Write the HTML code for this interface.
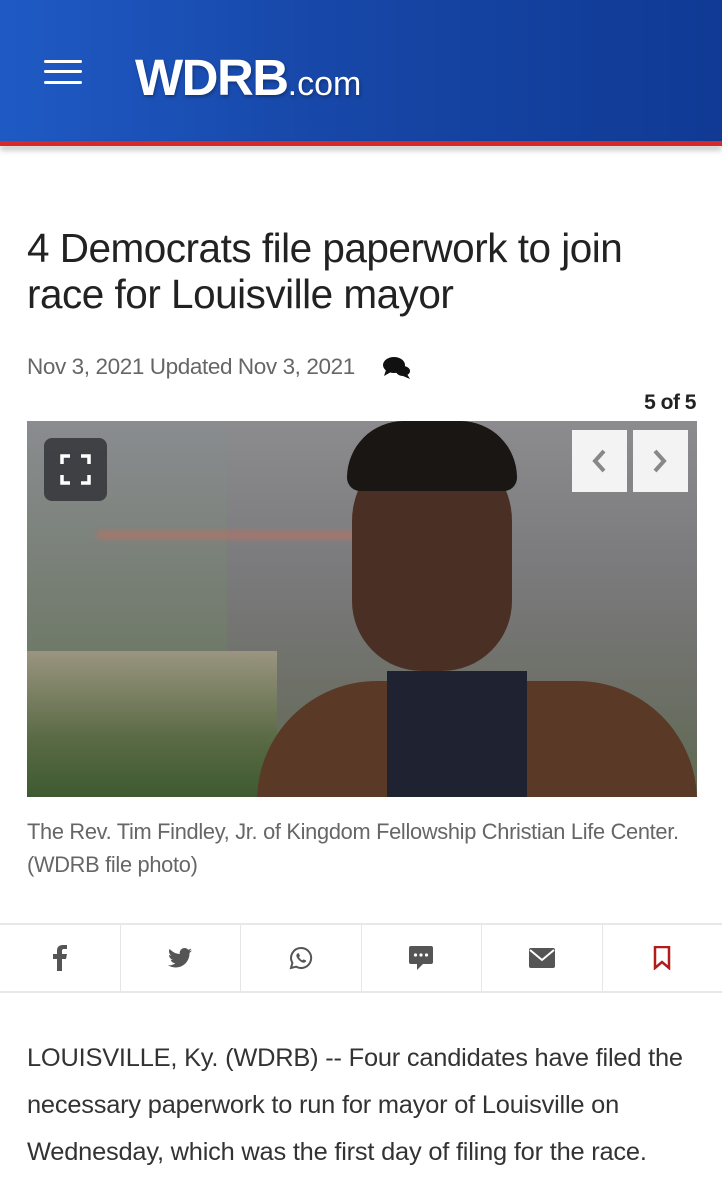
<!DOCTYPE html>
<html><head><meta charset="utf-8"><style>
*{margin:0;padding:0;box-sizing:border-box}
body{width:722px;height:1200px;overflow:hidden;background:#fff;font-family:"Liberation Sans",sans-serif;color:#333;position:relative}
.hdr{position:absolute;left:0;top:0;width:722px;height:141px;background:linear-gradient(90deg,#1f5ac4 0%,#1747a8 45%,#103a94 100%);}
.red{position:absolute;left:0;top:141px;width:722px;height:5px;background:#d42a2a;box-shadow:0 4px 6px rgba(0,0,0,.25)}
.ham{position:absolute;left:44px;width:38px;height:3px;background:#fff;border-radius:2px}
.logo{position:absolute;left:135px;top:48px;color:#fff;font-weight:bold;font-size:51px;letter-spacing:-1.5px;text-shadow:1px 2px 3px rgba(0,0,0,.3);white-space:nowrap}
.logo span{font-size:34px;font-weight:normal;letter-spacing:0}
h1{position:absolute;left:27px;top:225px;width:700px;font-weight:normal;font-size:40.5px;line-height:46px;color:#222;letter-spacing:-0.5px;white-space:nowrap}
.date{position:absolute;left:27px;top:354px;font-size:22.5px;color:#666;letter-spacing:-0.4px}
.cnt{position:absolute;right:26px;top:391px;font-weight:bold;font-size:21px;color:#222;letter-spacing:-0.5px}
.img{position:absolute;left:27px;top:421px;width:670px;height:376px;overflow:hidden;
background:linear-gradient(180deg,#8c8c8e 0%,#7a7a7c 40%,#6e7068 70%,#5d6a50 100%)}
.cap{position:absolute;left:27px;top:815px;width:700px;font-size:21.8px;line-height:33px;color:#666;letter-spacing:-0.3px;white-space:nowrap}
.share{position:absolute;left:0;top:923px;width:722px;height:70px;border-top:2px solid #e8e8e8;border-bottom:2px solid #e8e8e8;display:flex}
.share div{flex:1;border-right:1px solid #e6e6e6;display:flex;align-items:center;justify-content:center}
.share div:last-child{border-right:none}
.body{position:absolute;left:27px;top:1035px;width:700px;font-size:25.4px;line-height:47px;color:#333;letter-spacing:-0.2px;white-space:nowrap}
</style></head><body>
<div class="hdr">
<div class="ham" style="top:60px"></div><div class="ham" style="top:70px"></div><div class="ham" style="top:81px"></div>
<div class="logo">WDRB<span>.com</span></div>
</div>
<div class="red"></div>
<h1>4 Democrats file paperwork to join<br>race for Louisville mayor</h1>
<div class="date">Nov 3, 2021 Updated Nov 3, 2021</div>
<svg style="position:absolute;left:382px;top:356px" width="30" height="24" viewBox="0 0 30 24"><ellipse cx="12" cy="9" rx="11" ry="8" fill="#111"/><path d="M4 14 L2 20 L9 16Z" fill="#111"/><ellipse cx="21" cy="15" rx="7" ry="5" fill="#111"/><path d="M25 18 L28 23 L21 20Z" fill="#111"/></svg>
<div class="cnt">5 of 5</div>
<div class="img">
<div style="position:absolute;left:0;top:0;width:200px;height:376px;background:linear-gradient(180deg,#8a8c90,#707a6a 60%,#4e6040)"></div>
<div style="position:absolute;left:0;top:230px;width:250px;height:146px;background:linear-gradient(180deg,#9a9580,#5a6a45 60%,#3e5a30)"></div>
<div style="position:absolute;left:70px;top:110px;width:280px;height:8px;background:#c07060;opacity:.6;filter:blur(3px)"></div>
<div style="position:absolute;left:230px;top:260px;width:440px;height:140px;border-radius:120px 120px 0 0;background:#5a3a26"></div>
<div style="position:absolute;left:360px;top:250px;width:140px;height:130px;background:#1f2230"></div>
<div style="position:absolute;left:325px;top:20px;width:160px;height:230px;border-radius:80px 80px 70px 70px;background:#4a3024"></div>
<div style="position:absolute;left:320px;top:0;width:170px;height:70px;border-radius:85px 85px 20px 20px;background:#1a1614"></div>
<div style="position:absolute;left:17px;top:17px;width:63px;height:63px;border-radius:8px;background:rgba(50,52,56,.85)"></div>
<svg style="position:absolute;left:33px;top:33px" width="31" height="31" viewBox="0 0 31 31" fill="none" stroke="#fff" stroke-width="3.5"><path d="M2 10V2h8M21 2h8v8M29 21v8h-8M10 29H2v-8"/></svg>
<div style="position:absolute;left:545px;top:9px;width:55px;height:62px;background:#f3f3f3"></div>
<div style="position:absolute;left:606px;top:9px;width:55px;height:62px;background:#f3f3f3"></div>
<svg style="position:absolute;left:563px;top:27px" width="18" height="26" viewBox="0 0 18 26"><path d="M14 3L5 13l9 10" stroke="#888" stroke-width="4" fill="none"/></svg>
<svg style="position:absolute;left:624px;top:27px" width="18" height="26" viewBox="0 0 18 26"><path d="M4 3l9 10-9 10" stroke="#888" stroke-width="4" fill="none"/></svg>
</div>
<div class="cap">The Rev. Tim Findley, Jr. of Kingdom Fellowship Christian Life Center.<br>(WDRB file photo)</div>
<div class="share">
<div><svg width="14" height="26" viewBox="0 0 14 26"><path d="M9 26V14h4l1-5H9V6c0-1.5.5-2 2-2h3V0h-4C6 0 4 2 4 5.5V9H0v5h4v12z" fill="#555"/></svg></div>
<div><svg width="24" height="20" viewBox="0 0 24 20"><path d="M24 2.4c-.9.4-1.8.6-2.8.8 1-.6 1.8-1.6 2.1-2.7-1 .6-2 1-3.1 1.2C19.3.7 18 0 16.6 0c-2.7 0-4.9 2.2-4.9 4.9 0 .4 0 .8.1 1.1C7.7 5.8 4.1 3.9 1.7.9c-.4.7-.7 1.6-.7 2.5 0 1.7.9 3.2 2.2 4.1-.8 0-1.6-.2-2.2-.6 0 2.4 1.7 4.4 3.9 4.8-.7.2-1.5.2-2.2.1.6 2 2.4 3.4 4.6 3.4-1.7 1.3-3.8 2.1-6.1 2.1H0c2.2 1.4 4.8 2.2 7.5 2.2 9.1 0 14-7.5 14-14v-.6c1-.7 1.8-1.6 2.5-2.5z" fill="#555"/></svg></div>
<div><svg width="24" height="24" viewBox="0 0 24 24"><path d="M12 2a10 10 0 0 0-8.6 15L2 22l5.2-1.3A10 10 0 1 0 12 2z" fill="none" stroke="#555" stroke-width="2"/><path d="M8.5 7.5c.5-.5 1.2-.4 1.5.2l.8 1.7c.2.4 0 .8-.3 1.1l-.5.5c.7 1.5 1.8 2.6 3.3 3.3l.5-.5c.3-.3.7-.4 1.1-.3l1.7.8c.6.3.7 1 .2 1.5-1 1-2.5 1.2-4 .4-2.2-1.2-4-3-5.1-5.2-.7-1.4-.3-2.7.8-3.5z" fill="#555"/></svg></div>
<div><svg width="26" height="26" viewBox="0 0 26 26"><rect x="1" y="1" width="24" height="18" rx="2" fill="#555"/><path d="M9 19v6l6-6z" fill="#555"/><circle cx="7.5" cy="10" r="1.6" fill="#fff"/><circle cx="13" cy="10" r="1.6" fill="#fff"/><circle cx="18.5" cy="10" r="1.6" fill="#fff"/></svg></div>
<div><svg width="26" height="20" viewBox="0 0 26 20"><rect x="0" y="0" width="26" height="20" rx="2" fill="#555"/><path d="M1 2l12 10L25 2" stroke="#fff" stroke-width="2" fill="none"/></svg></div>
<div><svg width="18" height="24" viewBox="0 0 18 24"><path d="M2 1h14v21l-7-6-7 6z" fill="none" stroke="#b01c1c" stroke-width="2.5"/></svg></div>
</div>
<div class="body">LOUISVILLE, Ky. (WDRB) -- Four candidates have filed the<br>necessary paperwork to run for mayor of Louisville on<br>Wednesday, which was the first day of filing for the race.</div>
</body></html>
